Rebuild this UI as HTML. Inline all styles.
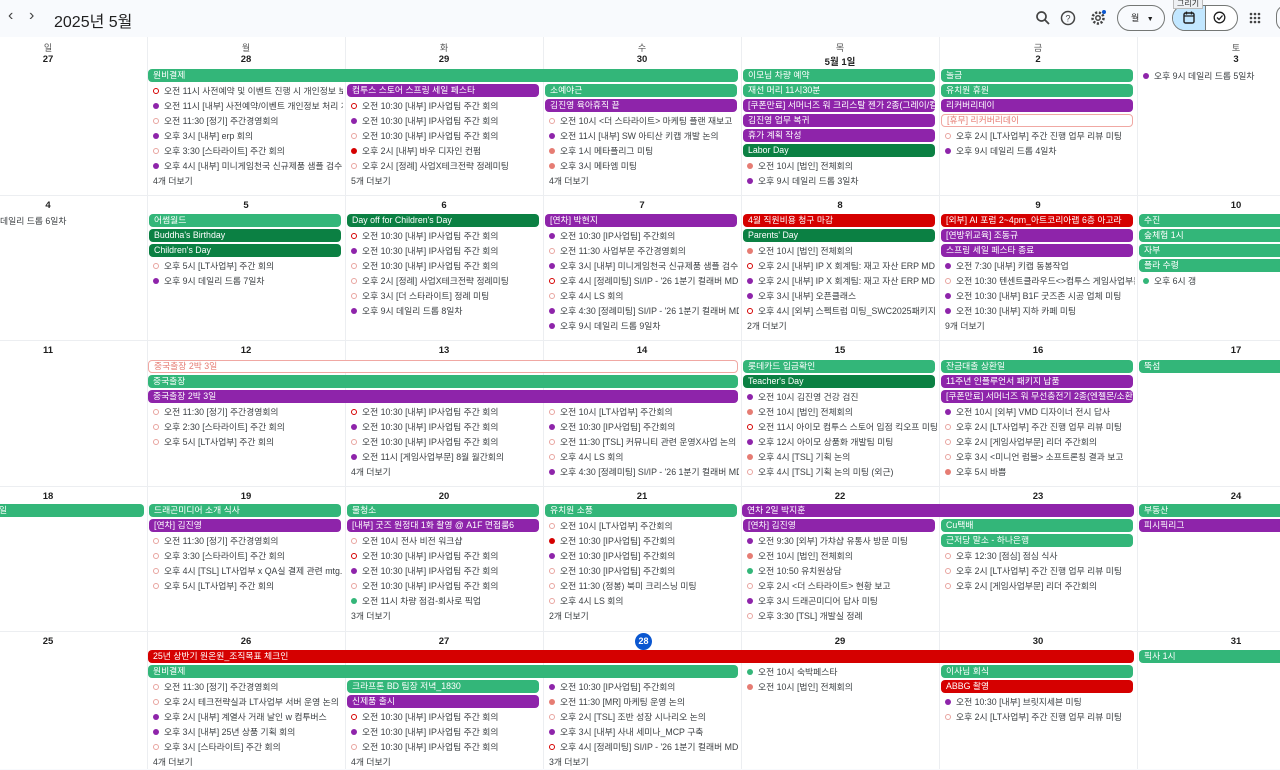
<!DOCTYPE html>
<html><head><meta charset="utf-8">
<style>
*{box-sizing:border-box;margin:0;padding:0}
body{width:1280px;height:769px;overflow:hidden;background:#f8fafd;font-family:"Liberation Sans","Noto Sans CJK KR",sans-serif;color:#3c4043;position:relative}
#grid{position:absolute;left:0;top:37px;width:1280px;height:732px;background:#fff;overflow:hidden}
.vl{position:absolute;top:0;width:1px;height:732px;background:#eceef1}
.hl{position:absolute;left:0;width:1280px;height:1px;background:#eceef1}
.abs{position:absolute}
.wd{position:absolute;width:198px;text-align:center;font-size:9px;color:#555}
.dn{position:absolute;width:198px;text-align:center;font-size:9.5px;color:#1f1f1f;font-weight:bold}
.c{position:absolute;width:196px;overflow:hidden}
.e{height:15px;line-height:15px;font-size:8.8px;white-space:nowrap;overflow:hidden;padding-left:6px;color:#3c4043}
.d{display:inline-block;width:6px;height:6px;border-radius:50%;margin-right:5px;vertical-align:0px}
.p{background:#8e24aa}.s{background:#e67c73}.r{background:#d50000}.gd{background:#33b679}
.o{border:1.2px solid #e8a49f;background:#fff}.or{border:1.2px solid #d50000;background:#fff}
.b{height:13px;line-height:13px;margin:0 2px 2px 2px;border-radius:4px;color:#fff;font-size:8.8px;padding-left:5px;white-space:nowrap;overflow:hidden}
.ab{position:absolute;height:13px;line-height:13px;border-radius:4px;color:#fff;font-size:8.8px;padding-left:5px;white-space:nowrap;overflow:hidden}
.G{background:#33b679}.P{background:#8e24aa}.D{background:#0b8043}.R{background:#d50000}
.W{background:#fff;border:1px solid #f0a8a3;color:#e67c73;line-height:11px}
.more{height:15px;line-height:15px;font-size:8.8px;padding-left:6px;color:#3c4043}
</style></head><body>
<div class="abs" style="left:8px;top:7px;font-size:16px;color:#444">&#8249;</div>
<div class="abs" style="left:29px;top:7px;font-size:16px;color:#444">&#8250;</div>
<div class="abs" style="left:54px;top:8px;font-size:16px;color:#1f1f1f">2025년 5월</div>
<svg class="abs" style="left:1035px;top:10px" width="16" height="16" viewBox="0 0 16 16"><circle cx="6.5" cy="6.5" r="4.5" fill="none" stroke="#444" stroke-width="1.7"/><path d="M10 10l4 4" stroke="#444" stroke-width="1.8"/></svg>
<svg class="abs" style="left:1060px;top:10px" width="16" height="16" viewBox="0 0 16 16"><circle cx="8" cy="8" r="6.5" fill="none" stroke="#444" stroke-width="1.5"/><text x="8" y="11.5" font-size="9" text-anchor="middle" fill="#444" font-family="Liberation Sans">?</text></svg>
<svg class="abs" style="left:1089px;top:9px" width="18" height="18" viewBox="0 0 18 18"><circle cx="9" cy="9" r="5.5" fill="none" stroke="#444" stroke-width="2.5" stroke-dasharray="2.2 1.6"/><circle cx="9" cy="9" r="2.2" fill="none" stroke="#444" stroke-width="1.5"/><circle cx="15" cy="3" r="2" fill="#0b57d0"/></svg>
<div class="abs" style="left:1117px;top:5px;width:48px;height:26px;border:1px solid #747775;border-radius:13px;font-size:9px;line-height:24px;padding-left:13px;color:#1f1f1f">월 <span style="font-size:7px;margin-left:5px">&#9660;</span></div>
<div class="abs" style="left:1172px;top:5px;width:66px;height:26px;border:1px solid #747775;border-radius:13px;overflow:hidden;background:#fff"><div style="width:33px;height:26px;background:#c2e7ff;border-right:1px solid #747775"></div></div>
<svg class="abs" style="left:1183px;top:11px" width="12" height="13" viewBox="0 0 12 13"><rect x="1" y="2" width="10" height="10" rx="1.5" fill="none" stroke="#1f1f1f" stroke-width="1.4"/><path d="M1 5h10M3.5 0.5v3M8.5 0.5v3" stroke="#1f1f1f" stroke-width="1.3"/></svg>
<svg class="abs" style="left:1213px;top:11px" width="13" height="13" viewBox="0 0 13 13"><circle cx="6.5" cy="6.5" r="5.3" fill="none" stroke="#1f1f1f" stroke-width="1.3"/><path d="M4 6.5l2 2 3.5-4" fill="none" stroke="#1f1f1f" stroke-width="1.3"/></svg>
<div class="abs" style="left:1173px;top:-2px;height:11px;padding:0 3px;background:#eef0f3;border:1px solid #bbb;font-size:8px;line-height:10px;color:#333">그리기</div>
<svg class="abs" style="left:1249px;top:12px" width="12" height="12" viewBox="0 0 12 12"><g fill="#444"><circle cx="2" cy="2" r="1.3"/><circle cx="6" cy="2" r="1.3"/><circle cx="10" cy="2" r="1.3"/><circle cx="2" cy="6" r="1.3"/><circle cx="6" cy="6" r="1.3"/><circle cx="10" cy="6" r="1.3"/><circle cx="2" cy="10" r="1.3"/><circle cx="6" cy="10" r="1.3"/><circle cx="10" cy="10" r="1.3"/></g></svg>
<div class="abs" style="left:1276px;top:5px;width:20px;height:26px;border:1px solid #747775;border-radius:13px"></div>

<div id="grid">
<div class="vl" style="left:147px"></div><div class="vl" style="left:345px"></div><div class="vl" style="left:543px"></div><div class="vl" style="left:741px"></div><div class="vl" style="left:939px"></div><div class="vl" style="left:1137px"></div>
<div class="hl" style="top:158px"></div><div class="hl" style="top:303px"></div><div class="hl" style="top:449px"></div><div class="hl" style="top:594px"></div>
</div>
<div id="ov">
<div class="wd" style="left:-51px;top:41px">일</div><div class="wd" style="left:147px;top:41px">월</div><div class="wd" style="left:345px;top:41px">화</div><div class="wd" style="left:543px;top:41px">수</div><div class="wd" style="left:741px;top:41px">목</div><div class="wd" style="left:939px;top:41px">금</div><div class="wd" style="left:1137px;top:41px">토</div>
<div class="dn" style="left:-51px;top:54px">27</div><div class="dn" style="left:147px;top:54px">28</div><div class="dn" style="left:345px;top:54px">29</div><div class="dn" style="left:543px;top:54px">30</div><div class="dn" style="left:741px;top:54px">5월 1일</div><div class="dn" style="left:939px;top:54px">2</div><div class="dn" style="left:1137px;top:54px">3</div>
<div class="dn" style="left:-51px;top:200px">4</div><div class="dn" style="left:147px;top:200px">5</div><div class="dn" style="left:345px;top:200px">6</div><div class="dn" style="left:543px;top:200px">7</div><div class="dn" style="left:741px;top:200px">8</div><div class="dn" style="left:939px;top:200px">9</div><div class="dn" style="left:1137px;top:200px">10</div>
<div class="dn" style="left:-51px;top:345px">11</div><div class="dn" style="left:147px;top:345px">12</div><div class="dn" style="left:345px;top:345px">13</div><div class="dn" style="left:543px;top:345px">14</div><div class="dn" style="left:741px;top:345px">15</div><div class="dn" style="left:939px;top:345px">16</div><div class="dn" style="left:1137px;top:345px">17</div>
<div class="dn" style="left:-51px;top:491px">18</div><div class="dn" style="left:147px;top:491px">19</div><div class="dn" style="left:345px;top:491px">20</div><div class="dn" style="left:543px;top:491px">21</div><div class="dn" style="left:741px;top:491px">22</div><div class="dn" style="left:939px;top:491px">23</div><div class="dn" style="left:1137px;top:491px">24</div>
<div class="dn" style="left:-51px;top:636px">25</div><div class="dn" style="left:147px;top:636px">26</div><div class="dn" style="left:345px;top:636px">27</div>
<div class="abs" style="left:635px;top:633px;width:17px;height:17px;border-radius:50%;background:#0b57d0;color:#fff;font-size:9px;font-weight:bold;text-align:center;line-height:17px">28</div>
<div class="dn" style="left:741px;top:636px">29</div><div class="dn" style="left:939px;top:636px">30</div><div class="dn" style="left:1137px;top:636px">31</div>

<div class="ab G" style="left:148px;top:69px;width:590px">원비결제</div>
<div class="c" style="left:147px;top:84px">
<div class="e"><i class="d or"></i>오전 11시 사전예약 및 이벤트 진행 시 개인정보 보안</div>
<div class="e"><i class="d p"></i>오전 11시 [내부] 사전예약/이벤트 개인정보 처리 개선</div>
<div class="e"><i class="d o"></i>오전 11:30 [정기] 주간경영회의</div>
<div class="e"><i class="d p"></i>오후 3시 [내부] erp 회의</div>
<div class="e"><i class="d o"></i>오후 3:30 [스타라이트] 주간 회의</div>
<div class="e"><i class="d p"></i>오후 4시 [내부] 미니게임천국 신규제품 샘플 검수 (미</div>
<div class="more">4개 더보기</div></div>
<div class="c" style="left:345px;top:84px">
<div class="b P">컴투스 스토어 스프링 세일 페스타</div>
<div class="e"><i class="d or"></i>오전 10:30 [내부] IP사업팀 주간 회의</div>
<div class="e"><i class="d p"></i>오전 10:30 [내부] IP사업팀 주간 회의</div>
<div class="e"><i class="d o"></i>오전 10:30 [내부] IP사업팀 주간 회의</div>
<div class="e"><i class="d r"></i>오후 2시 [내부] 바우 디자인 컨펌</div>
<div class="e"><i class="d o"></i>오후 2시 [정례] 사업X테크전략 정례미팅</div>
<div class="more">5개 더보기</div></div>
<div class="c" style="left:543px;top:84px">
<div class="b G">소예야근</div>
<div class="b P">김진영 육아휴직 끝</div>
<div class="e"><i class="d o"></i>오전 10시 &lt;더 스타라이트&gt; 마케팅 플랜 재보고</div>
<div class="e"><i class="d p"></i>오전 11시 [내부] SW 아티산 키캡 개발 논의</div>
<div class="e"><i class="d s"></i>오후 1시 메타플리그 미팅</div>
<div class="e"><i class="d s"></i>오후 3시 메타엠 미팅</div>
<div class="more">4개 더보기</div></div>
<div class="c" style="left:741px;top:69px">
<div class="b G">이모님 차량 예약</div>
<div class="b G">재선 머리 11시30분</div>
<div class="b P">[쿠폰만료] 서머너즈 워 크리스탈 젠가 2종(그레이/컬러</div>
<div class="b P">김진영 업무 복귀</div>
<div class="b P">휴가 계획 작성</div>
<div class="b D">Labor Day</div>
<div class="e"><i class="d s"></i>오전 10시 [법인] 전체회의</div>
<div class="e"><i class="d p"></i>오후 9시 데일리 드롭 3일차</div></div>
<div class="c" style="left:939px;top:69px">
<div class="b G">놀금</div>
<div class="b G">유치원 휴원</div>
<div class="b P">리커버리데이</div>
<div class="b W">[휴무] 리커버리데이</div>
<div class="e"><i class="d o"></i>오후 2시 [LT사업부] 주간 진행 업무 리뷰 미팅</div>
<div class="e"><i class="d p"></i>오후 9시 데일리 드롭 4일차</div></div>
<div class="c" style="left:1137px;top:69px;width:143px">
<div class="e"><i class="d p"></i>오후 9시 데일리 드롭 5일차</div></div>

<div class="c" style="left:-51px;top:214px">
<div class="e"><i class="d p"></i>오후 9시 데일리 드롭 6일차</div></div>
<div class="c" style="left:147px;top:214px">
<div class="b G">어썸월드</div>
<div class="b D">Buddha's Birthday</div>
<div class="b D">Children's Day</div>
<div class="e"><i class="d o"></i>오후 5시 [LT사업부] 주간 회의</div>
<div class="e"><i class="d p"></i>오후 9시 데일리 드롭 7일차</div></div>
<div class="c" style="left:345px;top:214px">
<div class="b D">Day off for Children's Day</div>
<div class="e"><i class="d or"></i>오전 10:30 [내부] IP사업팀 주간 회의</div>
<div class="e"><i class="d p"></i>오전 10:30 [내부] IP사업팀 주간 회의</div>
<div class="e"><i class="d o"></i>오전 10:30 [내부] IP사업팀 주간 회의</div>
<div class="e"><i class="d o"></i>오후 2시 [정례] 사업X테크전략 정례미팅</div>
<div class="e"><i class="d o"></i>오후 3시 [더 스타라이트] 정례 미팅</div>
<div class="e"><i class="d p"></i>오후 9시 데일리 드롭 8일차</div></div>
<div class="c" style="left:543px;top:214px">
<div class="b P">[연차] 박현지</div>
<div class="e"><i class="d p"></i>오전 10:30 [IP사업팀] 주간회의</div>
<div class="e"><i class="d o"></i>오전 11:30 사업부문 주간경영회의</div>
<div class="e"><i class="d p"></i>오후 3시 [내부] 미니게임천국 신규제품 샘플 검수</div>
<div class="e"><i class="d or"></i>오후 4시 [정례미팅] SI/IP - '26 1분기 컬래버 MD 관련</div>
<div class="e"><i class="d o"></i>오후 4시 LS 회의</div>
<div class="e"><i class="d p"></i>오후 4:30 [정례미팅] SI/IP - '26 1분기 컬래버 MD 관련</div>
<div class="e"><i class="d p"></i>오후 9시 데일리 드롭 9일차</div></div>
<div class="c" style="left:741px;top:214px">
<div class="b R">4월 직원비용 청구 마감</div>
<div class="b D">Parents' Day</div>
<div class="e"><i class="d s"></i>오전 10시 [법인] 전체회의</div>
<div class="e"><i class="d or"></i>오후 2시 [내부] IP X 회계팀: 재고 자산 ERP MD 원가</div>
<div class="e"><i class="d p"></i>오후 2시 [내부] IP X 회계팀: 재고 자산 ERP MD 원가</div>
<div class="e"><i class="d p"></i>오후 3시 [내부] 오픈클래스</div>
<div class="e"><i class="d or"></i>오후 4시 [외부] 스펙트럼 미팅_SWC2025패키지 제작</div>
<div class="more">2개 더보기</div></div>
<div class="c" style="left:939px;top:214px">
<div class="b R">[외부] AI 포럼 2~4pm_아트코리아랩 6층 아고라</div>
<div class="b P">[연방위교육] 조동규</div>
<div class="b P">스프링 세일 페스타 종료</div>
<div class="e"><i class="d p"></i>오전 7:30 [내부] 키캡 동봉작업</div>
<div class="e"><i class="d o"></i>오전 10:30 텐센트클라우드&lt;&gt;컴투스 게임사업부문</div>
<div class="e"><i class="d p"></i>오전 10:30 [내부] B1F 굿즈존 시공 업체 미팅</div>
<div class="e"><i class="d p"></i>오전 10:30 [내부] 지하 카페 미팅</div>
<div class="more">9개 더보기</div></div>
<div class="c" style="left:1137px;top:214px">
<div class="b G">수진</div>
<div class="b G">숲체험 1시</div>
<div class="b G">자부</div>
<div class="b G">플라 수령</div>
<div class="e"><i class="d gd"></i>오후 6시 갱</div></div>

<div class="ab W" style="left:148px;top:360px;width:590px">중국출장 2박 3일</div>
<div class="ab G" style="left:148px;top:375px;width:590px">중국출장</div>
<div class="ab P" style="left:148px;top:390px;width:590px">중국출장 2박 3일</div>
<div class="c" style="left:147px;top:405px">
<div class="e"><i class="d o"></i>오전 11:30 [정기] 주간경영회의</div>
<div class="e"><i class="d o"></i>오후 2:30 [스타라이트] 주간 회의</div>
<div class="e"><i class="d o"></i>오후 5시 [LT사업부] 주간 회의</div></div>
<div class="c" style="left:345px;top:405px">
<div class="e"><i class="d or"></i>오전 10:30 [내부] IP사업팀 주간 회의</div>
<div class="e"><i class="d p"></i>오전 10:30 [내부] IP사업팀 주간 회의</div>
<div class="e"><i class="d o"></i>오전 10:30 [내부] IP사업팀 주간 회의</div>
<div class="e"><i class="d p"></i>오전 11시 [게임사업부문] 8월 월간회의</div>
<div class="more">4개 더보기</div></div>
<div class="c" style="left:543px;top:405px">
<div class="e"><i class="d o"></i>오전 10시 [LT사업부] 주간회의</div>
<div class="e"><i class="d p"></i>오전 10:30 [IP사업팀] 주간회의</div>
<div class="e"><i class="d o"></i>오전 11:30 [TSL] 커뮤니티 관련 운영X사업 논의 미팅</div>
<div class="e"><i class="d o"></i>오후 4시 LS 회의</div>
<div class="e"><i class="d p"></i>오후 4:30 [정례미팅] SI/IP - '26 1분기 컬래버 MD 관련</div></div>
<div class="c" style="left:741px;top:360px">
<div class="b G">롯데카드 입금확인</div>
<div class="b D">Teacher's Day</div>
<div class="e"><i class="d p"></i>오전 10시 김진영 건강 검진</div>
<div class="e"><i class="d s"></i>오전 10시 [법인] 전체회의</div>
<div class="e"><i class="d or"></i>오전 11시 아이모 컴투스 스토어 입점 킥오프 미팅 (A</div>
<div class="e"><i class="d p"></i>오후 12시 아이모 상품화 개발팀 미팅</div>
<div class="e"><i class="d s"></i>오후 4시 [TSL] 기획 논의</div>
<div class="e"><i class="d o"></i>오후 4시 [TSL] 기획 논의 미팅 (외근)</div></div>
<div class="c" style="left:939px;top:360px">
<div class="b G">잔금대출 상환일</div>
<div class="b P">11주년 인플루언서 패키지 납품</div>
<div class="b P">[쿠폰만료] 서머너즈 워 무선충전기 2종(엔젤몬/소환진</div>
<div class="e"><i class="d p"></i>오전 10시 [외부] VMD 디자이너 전시 답사</div>
<div class="e"><i class="d o"></i>오후 2시 [LT사업부] 주간 진행 업무 리뷰 미팅</div>
<div class="e"><i class="d o"></i>오후 2시 [게임사업부문] 리더 주간회의</div>
<div class="e"><i class="d o"></i>오후 3시 &lt;미니언 럼블&gt; 소프트론칭 결과 보고</div>
<div class="e"><i class="d s"></i>오후 5시 바쁨</div></div>
<div class="c" style="left:1137px;top:360px">
<div class="b G">뚝섬</div></div>

<div class="ab G" style="left:-49px;top:504px;width:193px;padding-left:48px">일</div>
<div class="c" style="left:147px;top:504px">
<div class="b G">드래곤미디어 소개 식사</div>
<div class="b P">[연차] 김진영</div>
<div class="e"><i class="d o"></i>오전 11:30 [정기] 주간경영회의</div>
<div class="e"><i class="d o"></i>오후 3:30 [스타라이트] 주간 회의</div>
<div class="e"><i class="d o"></i>오후 4시 [TSL] LT사업부 x QA실 결제 관련 mtg. (A동</div>
<div class="e"><i class="d o"></i>오후 5시 [LT사업부] 주간 회의</div></div>
<div class="c" style="left:345px;top:504px">
<div class="b G">물청소</div>
<div class="b P">[내부] 굿즈 원정대 1화 촬영 @ A1F 면접룸6</div>
<div class="e"><i class="d o"></i>오전 10시 전사 비전 워크샵</div>
<div class="e"><i class="d or"></i>오전 10:30 [내부] IP사업팀 주간 회의</div>
<div class="e"><i class="d p"></i>오전 10:30 [내부] IP사업팀 주간 회의</div>
<div class="e"><i class="d o"></i>오전 10:30 [내부] IP사업팀 주간 회의</div>
<div class="e"><i class="d gd"></i>오전 11시 차량 점검-회사로 픽업</div>
<div class="more">3개 더보기</div></div>
<div class="c" style="left:543px;top:504px">
<div class="b G">유치원 소풍</div>
<div class="e"><i class="d o"></i>오전 10시 [LT사업부] 주간회의</div>
<div class="e"><i class="d r"></i>오전 10:30 [IP사업팀] 주간회의</div>
<div class="e"><i class="d p"></i>오전 10:30 [IP사업팀] 주간회의</div>
<div class="e"><i class="d o"></i>오전 10:30 [IP사업팀] 주간회의</div>
<div class="e"><i class="d o"></i>오전 11:30 (정봉) 북미 크리스닝 미팅</div>
<div class="e"><i class="d o"></i>오후 4시 LS 회의</div>
<div class="more">2개 더보기</div></div>
<div class="ab P" style="left:742px;top:504px;width:392px">연차 2일 박지훈</div>
<div class="c" style="left:741px;top:519px">
<div class="b P">[연차] 김진영</div>
<div class="e"><i class="d p"></i>오전 9:30 [외부] 가챠샵 유통사 방문 미팅</div>
<div class="e"><i class="d s"></i>오전 10시 [법인] 전체회의</div>
<div class="e"><i class="d gd"></i>오전 10:50 유치원상담</div>
<div class="e"><i class="d o"></i>오후 2시 &lt;더 스타라이트&gt; 현황 보고</div>
<div class="e"><i class="d p"></i>오후 3시 드래곤미디어 답사 미팅</div>
<div class="e"><i class="d o"></i>오후 3:30 [TSL] 개발실 정례</div></div>
<div class="c" style="left:939px;top:519px">
<div class="b G">Cu택배</div>
<div class="b G">근저당 말소 - 하나은행</div>
<div class="e"><i class="d o"></i>오후 12:30 [점심] 점심 식사</div>
<div class="e"><i class="d o"></i>오후 2시 [LT사업부] 주간 진행 업무 리뷰 미팅</div>
<div class="e"><i class="d o"></i>오후 2시 [게임사업부문] 리더 주간회의</div></div>
<div class="c" style="left:1137px;top:504px">
<div class="b G">부동산</div>
<div class="b P">피시픽리그</div></div>

<div class="ab R" style="left:148px;top:650px;width:986px">25년 상반기 원온원_조직목표 체크인</div>
<div class="ab G" style="left:148px;top:665px;width:590px">원비결제</div>
<div class="c" style="left:147px;top:680px">
<div class="e"><i class="d o"></i>오전 11:30 [정기] 주간경영회의</div>
<div class="e"><i class="d o"></i>오후 2시 테크전략실과 LT사업부 서버 운영 논의</div>
<div class="e"><i class="d p"></i>오후 2시 [내부] 계열사 거래 날인 w 컴투버스</div>
<div class="e"><i class="d p"></i>오후 3시 [내부] 25년 상품 기획 회의</div>
<div class="e"><i class="d o"></i>오후 3시 [스타라이트] 주간 회의</div>
<div class="more">4개 더보기</div></div>
<div class="c" style="left:345px;top:680px">
<div class="b G">크라프톤 BD 팀장 저녁_1830</div>
<div class="b P">신제품 출시</div>
<div class="e"><i class="d or"></i>오전 10:30 [내부] IP사업팀 주간 회의</div>
<div class="e"><i class="d p"></i>오전 10:30 [내부] IP사업팀 주간 회의</div>
<div class="e"><i class="d o"></i>오전 10:30 [내부] IP사업팀 주간 회의</div>
<div class="more">4개 더보기</div></div>
<div class="c" style="left:543px;top:680px">
<div class="e"><i class="d p"></i>오전 10:30 [IP사업팀] 주간회의</div>
<div class="e"><i class="d s"></i>오전 11:30 [MR] 마케팅 운영 논의</div>
<div class="e"><i class="d o"></i>오후 2시 [TSL] 조반 성장 시나리오 논의</div>
<div class="e"><i class="d p"></i>오후 3시 [내부] 사내 세미나_MCP 구축</div>
<div class="e"><i class="d or"></i>오후 4시 [정례미팅] SI/IP - '26 1분기 컬래버 MD 관련</div>
<div class="more">3개 더보기</div></div>
<div class="c" style="left:741px;top:665px">
<div class="e"><i class="d gd"></i>오전 10시 숙박페스타</div>
<div class="e"><i class="d s"></i>오전 10시 [법인] 전체회의</div></div>
<div class="c" style="left:939px;top:665px">
<div class="b G">이사님 회식</div>
<div class="b R">ABBG 촬영</div>
<div class="e"><i class="d p"></i>오전 10:30 [내부] 브릿지세븐 미팅</div>
<div class="e"><i class="d o"></i>오후 2시 [LT사업부] 주간 진행 업무 리뷰 미팅</div></div>
<div class="c" style="left:1137px;top:650px">
<div class="b G">픽사 1시</div></div>
</div>
</body></html>
